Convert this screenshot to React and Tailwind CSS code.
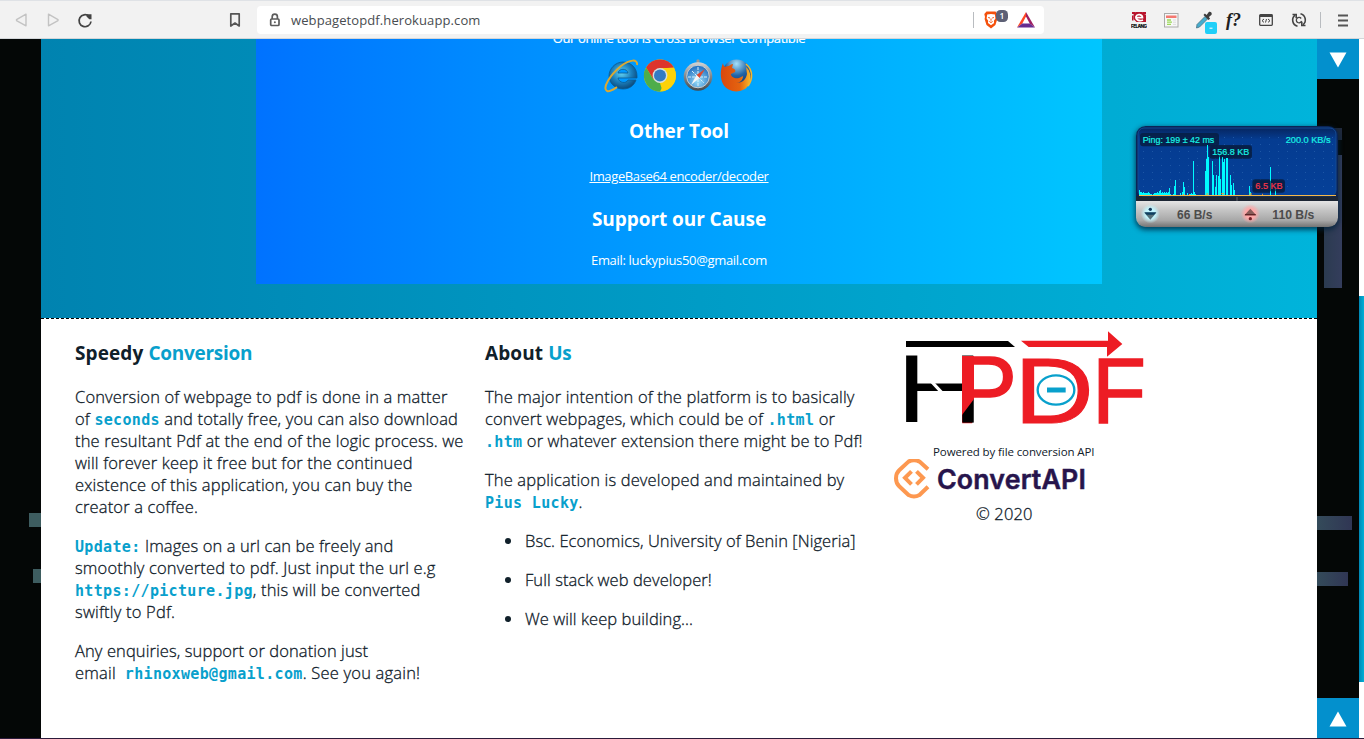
import React from "react";

const sans = "font-['Open_Sans','Noto_Sans',sans-serif]";

function ToolbarDivider({ className = "" }) {
  return <span className={`block h-4 w-px bg-[#b9bcc0] ${className}`} />;
}

function BrowserBar() {
  return (
    <header className="flex h-[39px] w-full items-center border-t border-b border-t-[#dfe2e6] border-b-[#d3d6d9] bg-[#f2f2f2] pt-px pl-[15px]">
      <svg width="80" height="18" viewBox="0 0 80 18" fill="none">
        <path d="M11 3.2v11.6L1.5 9.6V8.6L11 3.2Z" stroke="#c3c3c3" strokeWidth="1.4" strokeLinejoin="round" />
        <path d="M33.500 3.200v11.600L43 9.600V8.600L33.500 3.200Z" stroke="#c3c3c3" strokeWidth="1.400" strokeLinejoin="round" />
        <path d="M74 5.200A6 6 0 1 0 76 10.500" stroke="#434343" strokeWidth="1.700" />
        <path d="M71.500 3.200h5v5h-2.200l-2.800-2.800Z" fill="#434343" />
      </svg>
      <svg className="ml-[134px]" width="12" height="16" viewBox="0 0 12 16" fill="none">
        <path d="M1.800 1.800h8.400v12.200L6 11l-4.200 3Z" stroke="#555" strokeWidth="1.700" strokeLinejoin="round" />
      </svg>
      <div className="ml-4 flex h-7 w-[787px] items-center rounded-[4px] bg-white">
        <svg className="ml-3" width="12" height="14" viewBox="0 0 12 14" fill="none">
          <path d="M3.200 6V3.800a2.600 2.600 0 0 1 5.200 0V6" stroke="#5c5c5c" strokeWidth="1.700" />
          <rect x="1.700" y="6" width="8.300" height="6.500" rx="1" stroke="#5c5c5c" strokeWidth="1.700" />
          <circle cx="5.850" cy="9.200" r="1" fill="#5c5c5c" />
        </svg>
        <span className={`${sans} ml-[10px] text-[13px] leading-none tracking-[0.1px] whitespace-nowrap text-[#484c50]`}>
          webpagetopdf.herokuapp.com
        </span>
        <ToolbarDivider className="mr-[9px] ml-auto" />
        <svg width="26" height="20" viewBox="0 0 26 20">
          <path d="M3.500 1.500h9l2 2.500-.6 3 .4 2-1.900 6L8 18.500 3.500 15 1.600 9 2 7 1.300 4Z" fill="#f4500c" />
          <path d="M4.200 4.500 8 4l3.900.5.500 4-1.500 2.200 .2 2.200L8 15.200l-3-2.300.2-2.200L3.600 8.500Z" fill="#fff" />
          <path d="M5.200 7.500 7 8M10.900 7.500 9.200 8M8 8.500v2.200M6.400 11.500 8 12.500l1.600-1" stroke="#f4500c" strokeWidth="1" fill="none" />
          <rect x="13" y="0" width="12" height="12" rx="4.500" fill="#5d6075" />
          <text x="19" y="9" textAnchor="middle" fontFamily="Open Sans" fontSize="8.500" fontWeight="600" fill="#fff">1</text>
        </svg>
        <svg className="mr-[9px] ml-2" width="18" height="16" viewBox="0 0 18 16">
          <path d="M9 0v4.500L5.300 11.500 0 15.500Z" fill="#ff4724" />
          <path d="M9 0l9 15.500-5.300-4L9 4.500Z" fill="#9e1f63" />
          <path d="M0 15.500h18l-5.300-4H5.300Z" fill="#662d91" />
        </svg>
      </div>
      <div className="ml-auto flex items-center">
        <svg width="16" height="16" viewBox="0 0 16 16">
          <path d="M1 0h3v2H1ZM12 0h3v2h-3ZM1 3.500h1.500v5H1Z" fill="#b8152d" />
          <path d="M4.500 0h7L14 2.500h1V10H5.500L2.500 7V2.500Z" fill="#b8152d" />
          <path d="M5 5.700h6.500C11.500 2 6 1.500 5 4.500 4.300 8 8.500 9.500 12 8" stroke="#fff" strokeWidth="1.700" fill="none" />
          <text x="0" y="15.500" fontFamily="Inter" fontSize="4.600" fontWeight="900" textLength="16" fill="#171717">FELANG</text>
        </svg>
        <svg className="ml-[17px]" width="15" height="15" viewBox="0 0 15 15">
          <rect x=".5" y=".5" width="13.500" height="13.500" fill="#f7f7f7" stroke="#aaa" />
          <rect x="2" y="2.500" width="10.500" height="2.500" fill="#f47870" />
          <path d="M3 7h4M3 9.200h5M3 11.400h4" stroke="#9bda58" strokeWidth="1.300" />
          <path d="M9 7h3M9 9.200h3M9 11.400h3" stroke="#ddd" />
        </svg>
        <svg className="-mb-[5px] ml-[16px]" width="23" height="23" viewBox="0 0 23 23">
          <path d="M2 13.500 10 5.500l2.500 2.500L4.500 16 1.500 17Z" fill="#45adce" stroke="#467083" strokeWidth=".8" />
          <path d="m8.500 4 1.400-1.400L11.600 4l2-2.700c1.500-1.500 4.200.5 2.700 2.700L13.900 6l1.200 1.700-1.600 1.400Z" fill="#3d3d3d" />
          <rect x="10" y="11" width="12" height="12" rx="2" fill="#20cff8" />
          <path d="M14.500 17.200h3" stroke="#fff" strokeWidth="1" />
        </svg>
        <span className="ml-[8px] w-[17px] font-['Liberation_Serif',serif] text-[18px] leading-[18px] font-bold whitespace-nowrap text-[#202020] italic">
          f?
        </span>
        <svg className="ml-[16px]" width="14" height="12" viewBox="0 0 14 12" fill="none">
          <rect x=".7" y=".7" width="12.600" height="10.600" rx=".8" stroke="#444" strokeWidth="1.300" />
          <path d="M1 2h12" stroke="#444" strokeWidth="2" />
          <path d="m5 5-2 1.700 2 1.700M9 5l2 1.700L9 8.400M7.500 5l-1 3.500" stroke="#444" strokeWidth="1" />
        </svg>
        <svg className="ml-[18px]" width="16" height="16" viewBox="0 0 16 16" fill="none" stroke="#454545" strokeWidth="1.600">
          <path d="M6.500 14.200A6.300 6.300 0 0 1 4 3.200M9.500 1.800A6.300 6.300 0 0 1 12 12.800" />
          <path d="M1.500 2.500h3.700v3.700M14.500 13.500h-3.700V9.800" />
          <path d="M10.200 6.500A2.700 2.700 0 1 0 10.600 9" strokeWidth="1.300" />
        </svg>
        <ToolbarDivider className="ml-[13px]" />
        <svg className="mr-4 ml-[17px]" width="10" height="13" viewBox="0 0 10 13">
          <path d="M0 1.500h10M0 6.500h10M0 11.500h10" stroke="#555" strokeWidth="2" />
        </svg>
      </div>
    </header>
  );
}

function BrowserLogos() {
  return (
    <svg width="150" height="36" viewBox="0 0 150 36">
      <defs>
        <radialGradient id="ie" cx=".45" cy=".4" r=".7">
          <stop offset="0" stopColor="#62d4f5" />
          <stop offset=".5" stopColor="#1b7fbd" />
          <stop offset="1" stopColor="#063763" />
        </radialGradient>
        <linearGradient id="steel" x1="0" y1="0" x2="0" y2="1">
          <stop offset="0" stopColor="#d5d5d5" />
          <stop offset=".5" stopColor="#81868b" />
          <stop offset="1" stopColor="#43494e" />
        </linearGradient>
        <radialGradient id="sea" cx=".5" cy=".7" r=".6">
          <stop offset="0" stopColor="#9be0fb" />
          <stop offset="1" stopColor="#2d79c5" />
        </radialGradient>
        <radialGradient id="globe" cx=".5" cy=".15" r=".8">
          <stop offset="0" stopColor="#a5e0fa" />
          <stop offset=".5" stopColor="#2365a7" />
          <stop offset="1" stopColor="#102b67" />
        </radialGradient>
        <linearGradient id="fox" x1="0" y1="0" x2="1" y2="0">
          <stop offset="0" stopColor="#d9480d" />
          <stop offset=".65" stopColor="#e5640f" />
          <stop offset="1" stopColor="#f9b92c" />
        </linearGradient>
      </defs>
      <path fillRule="evenodd" d="M19 4c8 0 14 6 14 14v2H14c1 5 8 6 10 2h8c-2 6-7 9-13 9C11 31 5 25 5 18S11 4 19 4Zm-5 11h10c-1-5-9-5-10 0Z" fill="url(#ie)" stroke="#0a5a94" strokeWidth=".8" />
      <path d="M33 7C34 1 26 1 17 8 6 17-2 30 3 33c3 1 7-2 10-4" fill="none" stroke="#dca932" strokeWidth="2" />
      <circle cx="56" cy="17.500" r="16" fill="#fcd209" />
      <path d="M42.100 9.500A16 16 0 0 1 69.900 9.500L56 10.500 49.500 21.500Z" fill="#dd342c" />
      <path d="M42.100 9.500 49.500 21.500 56 25 58.500 33.300A16 16 0 0 1 42.100 9.500Z" fill="#4ead4a" />
      <path d="M62.500 21 56 33.500A16 16 0 0 0 70 10H57Z" fill="#fcd209" />
      <circle cx="56" cy="17.500" r="7.400" fill="#d5dfe0" />
      <circle cx="56" cy="17.500" r="6" fill="#337bc4" />
      <rect x="92.500" y="1.500" width="3" height="4" rx="1" fill="#999" />
      <circle cx="94" cy="18.500" r="14.300" fill="url(#steel)" />
      <circle cx="94" cy="18.500" r="11.300" fill="url(#sea)" stroke="#c9ced1" />
      <path d="M94 9v20M84 19h20M88 13l12 12" stroke="#d9f0fb" strokeWidth="1" strokeDasharray="3 1" />
      <path d="m101 11-5.500 9-3-3Z" fill="#dd4931" />
      <path d="m87 27 5.500-10 3 3Z" fill="#f3f7f8" />
      <circle cx="132.500" cy="16" r="14.500" fill="url(#globe)" />
      <path d="M119 5c0 2 1 3 2 4 2-1 3-1 4-1 1-1 2-2 4-2l-1 4c3 1 4 2 3 4l-4 2c0 3 4 5 8 4l4-2c0 4-3 7-7 7 7 0 10-4 11-9l-1-7c5 4 6 13 2 19-6 8-20 7-25-2-3-6-3-14 0-21Z" fill="url(#fox)" />
      <path d="M142 6c7 6 7 15 2 22" fill="none" stroke="#f5b32c" strokeWidth="1.600" />
    </svg>
  );
}

function ToolPanel() {
  return (
    <section className={`${sans} flex h-[245px] w-[846px] flex-col items-center overflow-hidden bg-linear-to-r from-[#0072ff] to-[#00c6ff] whitespace-nowrap text-white`}>
      <p className="-mt-[11px] h-5 text-[13px] leading-5 tracking-[-0.36px] [-webkit-text-stroke:0.2px]">Our online tool is Cross Browser Compatible</p>
      <div className="mt-[10px] h-9">
        <BrowserLogos />
      </div>
      <h2 className="mt-6 text-[19px] leading-[26px] font-bold tracking-[-0.1px]">Other Tool</h2>
      <a className="mt-[22px] text-[13px] leading-5 tracking-[-0.37px] underline">ImageBase64 encoder/decoder</a>
      <h2 className="mt-5 text-[19px] leading-[26px] font-bold tracking-[-0.06px]">Support our Cause</h2>
      <p className="mt-[18px] text-[13px] leading-5 tracking-[-0.32px]">Email: luckypius50@gmail.com</p>
    </section>
  );
}

function Line({ className = "", children }) {
  return <span className={`block h-[22px] whitespace-pre ${className}`}>{children}</span>;
}

function Mono({ children }) {
  return (
    <b className="font-['DejaVu_Sans_Mono','Liberation_Mono',monospace] text-[15px] leading-none font-bold tracking-[0.33px] text-[#08a0cc] [-webkit-text-stroke:0]">
      {children}
    </b>
  );
}

function Heading({ first, second }) {
  return (
    <h3 className="mb-[22px] h-[22px] text-[19px] leading-[22px] font-bold tracking-[0.1px] text-[#10202a] [-webkit-text-stroke:0]">
      {first} <span className="tracking-[-0.27px] text-[#08a0cc]">{second}</span>
    </h3>
  );
}

function SpeedyColumn() {
  return (
    <div className="w-[410px]">
      <Heading first="Speedy" second="Conversion" />
      <p className="mb-[17px]">
        <Line>Conversion of webpage to pdf is done in a matter</Line>
        <Line>of <Mono>seconds</Mono> and totally free, you can also download</Line>
        <Line>the resultant Pdf at the end of the logic process. we</Line>
        <Line>will forever keep it free but for the continued</Line>
        <Line>existence of this application, you can buy the</Line>
        <Line>creator a coffee.</Line>
      </p>
      <p className="mb-[17px]">
        <Line className="tracking-[0.1px]"><Mono>Update:</Mono> Images on a url can be freely and</Line>
        <Line className="tracking-[0.17px]">smoothly converted to pdf. Just input the url e.g</Line>
        <Line><Mono>https://picture.jpg</Mono>, this will be converted</Line>
        <Line className="tracking-[0.2px]">swiftly to Pdf.</Line>
      </p>
      <p>
        <Line className="tracking-[0.1px]">Any enquiries, support or donation just</Line>
        <Line className="tracking-[0.2px]">email  <Mono>rhinoxweb@gmail.com</Mono>. See you again!</Line>
      </p>
    </div>
  );
}

function AboutColumn() {
  return (
    <div className="w-[409px]">
      <Heading first="About" second="Us" />
      <p className="mb-[17px]">
        <Line>The major intention of the platform is to basically</Line>
        <Line>convert webpages, which could be of <Mono>.html</Mono> or</Line>
        <Line className="tracking-[0.11px]"><Mono>.htm</Mono> or whatever extension there might be to Pdf!</Line>
      </p>
      <p className="mb-[17px]">
        <Line>The application is developed and maintained by</Line>
        <Line><Mono>Pius Lucky</Mono>.</Line>
      </p>
      <ul className="flex flex-col gap-[17px] tracking-[0.07px]">
        {["Bsc. Economics, University of Benin [Nigeria]", "Full stack web developer!", "We will keep building..."].map((item) => (
          <li key={item} className="flex items-center pl-5">
            <span className="mr-[14px] size-[6px] rounded-full bg-[#10202a]" />
            <Line>{item}</Line>
          </li>
        ))}
      </ul>
    </div>
  );
}

function HpdfLogo() {
  return (
    <svg className="ml-[11px] overflow-visible" width="240" height="97" viewBox="75 15 720 291" fontFamily="Liberation Sans">
      <path d="M78 48H384L405 66H78Z" fill="#000" />
      <path d="M423 47H684V19L727 57 681 95V66H446Z" fill="#ed1c24" />
      <text transform="translate(48.500 291) scale(1.240 1)" fontSize="291" fill="#000">H</text>
      <path d="M150 172h13l28 30h-13Z" fill="#fff" />
      <text transform="translate(225.500 290) scale(.98 1)" fontSize="284" fill="#ed1c24" stroke="#ed1c24" strokeWidth="4">P</text>
      <path d="M247 222H281V293H247Z" fill="#000" />
      <path d="M246 93H282V222L246 270Z" fill="#ed1c24" />
      <text transform="translate(403 294) scale(1.180 1)" fontSize="280" fill="#ed1c24" stroke="#ed1c24" strokeWidth="3">D</text>
      <text transform="translate(636 294) scale(.95 1)" fontSize="280" fill="#ed1c24" stroke="#ed1c24" strokeWidth="4">F</text>
      <ellipse cx="528" cy="195" rx="55" ry="44" fill="#fff" stroke="#08a0cc" strokeWidth="7" />
      <path d="M501 195h56" stroke="#08a0cc" strokeWidth="15" />
    </svg>
  );
}

function ConvertApiLogo() {
  return (
    <svg width="196" height="40" viewBox="0 0 196 40">
      <g fill="none" stroke="#fd9850" strokeWidth="4" strokeLinejoin="round" transform="translate(0 -.7)">
        <path d="M34 11 25.500 3.300Q20 .500 14.500 3.300L5.200 12Q2 15 2 20T5.200 28L14.500 36.700Q20 39.500 25.500 36.700L34 28.500" />
        <path d="M17.500 13 11 19.500 17.500 26M22.500 13 29 19.500 22.500 26" strokeLinejoin="miter" />
      </g>
      <text x="43" y="29.500" fontFamily="Inter" fontSize="26.500" fontWeight="600" textLength="149" lengthAdjust="spacingAndGlyphs" fill="#27144c" stroke="#27144c" strokeWidth=".5">ConvertAPI</text>
    </svg>
  );
}

function CreditsColumn() {
  return (
    <div className="-mt-3 flex w-[250px] flex-col">
      <HpdfLogo />
      <p className="mt-[17px] ml-[39px] text-[11.5px] leading-4 font-normal tracking-[-0.1px] whitespace-nowrap [-webkit-text-stroke:0]">Powered by file conversion API</p>
      <div className="-mt-[1px] h-10 [-webkit-text-stroke:0]">
        <ConvertApiLogo />
      </div>
      <p className="mt-1 ml-[82px]">© 2020</p>
    </div>
  );
}

function Footer() {
  return (
    <footer className={`${sans} flex h-[420px] border-t border-dashed border-black bg-white pt-[23px] pl-[34px] text-[16.5px] leading-[22px] font-light tracking-[0.15px] text-[#10202a] [-webkit-text-stroke:0.3px]`}>
      <SpeedyColumn />
      <AboutColumn />
      <CreditsColumn />
    </footer>
  );
}

const traffic = [
  [57, 225], [60, 230], [63, 232], [66, 234], [69, 232], [72, 234], [75, 235], [78, 233], [81, 234], [84, 231], [87, 233],
  [90, 236], [93, 238], [96, 239], [99, 238], [102, 235], [105, 233], [108, 235], [111, 232], [114, 234], [117, 228], [120, 226],
  [123, 233], [126, 232], [129, 234], [132, 232], [135, 233], [138, 231], [141, 234], [144, 232], [147, 219], [150, 236],
  [159, 236], [162, 212], [165, 195], [180, 234], [186, 232], [189, 201], [192, 216], [201, 235], [210, 238], [213, 233],
  [216, 236], [219, 138], [222, 230], [225, 236], [255, 168], [258, 132], [261, 90], [264, 125], [276, 138], [279, 180],
  [285, 216], [288, 180], [294, 183], [297, 118], [300, 192], [306, 125], [309, 142], [312, 132], [318, 130], [321, 129],
  [330, 180], [333, 210], [339, 204], [342, 226], [387, 213], [390, 230], [450, 156], [465, 222],
];

function TrafficMeter() {
  return (
    <div className="absolute top-[126px] left-[1136px] h-[101px] w-[202px] rounded-[10px] shadow-[0_2px_5px_1px_rgba(0,35,60,0.75)]">
      <svg width="202" height="101" viewBox="48 33 606 303" fontFamily="Liberation Sans">
        <defs>
          <linearGradient id="metal" x1="0" y1="0" x2="0" y2="1">
            <stop offset="0" stopColor="#e5e5e5" />
            <stop offset=".35" stopColor="#c5c5c5" />
            <stop offset=".75" stopColor="#a7a7a7" />
            <stop offset="1" stopColor="#747474" />
          </linearGradient>
          <linearGradient id="screen" x1="0" y1="0" x2="0" y2="1">
            <stop offset="0" stopColor="#062660" />
            <stop offset=".17" stopColor="#053c91" />
            <stop offset="1" stopColor="#054098" />
          </linearGradient>
          <pattern id="dots" x="69" y="66" width="27" height="21" patternUnits="userSpaceOnUse">
            <rect width="3" height="3" fill="#1d57a6" />
          </pattern>
          <radialGradient id="blueGlow"><stop offset=".5" stopColor="#c2f6ff" /><stop offset="1" stopColor="#c2f6ff" stopOpacity="0" /></radialGradient>
          <radialGradient id="redGlow"><stop offset=".5" stopColor="#ffa8a8" /><stop offset="1" stopColor="#ffa8a8" stopOpacity="0" /></radialGradient>
          <clipPath id="shell"><rect x="48" y="33" width="606" height="303" rx="29" /></clipPath>
        </defs>
        <g clipPath="url(#shell)">
          <rect x="48" y="33" width="606" height="225" fill="#0a2457" />
          <rect x="54" y="39" width="594" height="205" rx="18" fill="url(#screen)" stroke="#154b93" strokeWidth="3" />
          <rect x="60" y="55" width="580" height="175" fill="url(#dots)" />
          <rect x="48" y="244" width="606" height="14" fill="#1c2533" />
          <rect x="48" y="258" width="606" height="78" fill="url(#metal)" />
          <path d="M351 246v12" stroke="#5b6069" strokeWidth="3" />
        </g>
        <g fill="#071f45" fillOpacity=".88">
          <rect x="60" y="54" width="237" height="40" rx="9" />
          <rect x="268" y="90" width="128" height="41" rx="9" />
          <rect x="397" y="193" width="98" height="40" rx="9" />
        </g>
        <g fill="#00fbff" shapeRendering="crispEdges">
          {traffic.map(([x, y]) => (
            <rect key={x} x={x} y={y} width="3" height={241 - y} />
          ))}
        </g>
        <rect x="57" y="240" width="591" height="3" fill="#f5b84a" />
        <path d="M189 238.500h3M207 238.500h3M259 237h6M304 236h8M388 237h8M426 238h3" stroke="#ff9c28" strokeWidth="3" />
        <g fill="#071f45" fillOpacity=".65">
          <rect x="272" y="94" width="120" height="33" rx="6" />
          <rect x="401" y="197" width="90" height="32" rx="6" />
        </g>
        <g fontSize="29" fill="#18f3e6" stroke="#18f3e6" strokeWidth=".6">
          <text x="68" y="84" textLength="215" lengthAdjust="spacingAndGlyphs">Ping: 199 ± 42 ms</text>
          <text x="497" y="84" textLength="135" lengthAdjust="spacingAndGlyphs">200.0 KB/s</text>
          <text x="277" y="120" textLength="111" lengthAdjust="spacingAndGlyphs">156.8 KB</text>
          <text x="406" y="222" textLength="82" lengthAdjust="spacingAndGlyphs" fill="#fc3548" stroke="#fc3548">6.5 KB</text>
        </g>
        <circle cx="91" cy="296" r="29" fill="url(#blueGlow)" />
        <circle cx="91" cy="283" r="5" fill="#14395b" />
        <path d="M73 293h36l-18 21Z" fill="#557078" />
        <path d="M73 292h36l-7 7H80Z" fill="#0c3f60" />
        <circle cx="391" cy="296" r="29" fill="url(#redGlow)" />
        <circle cx="391" cy="311" r="5" fill="#762329" />
        <path d="M373 301h36l-18-20Z" fill="#875c59" />
        <path d="M375 299h32" stroke="#602627" strokeWidth="4" />
        <g fontSize="36" fontWeight="700" fill="#4c4c4c">
          <text x="171" y="312" textLength="106" lengthAdjust="spacingAndGlyphs">66 B/s</text>
          <text x="457" y="312" textLength="126" lengthAdjust="spacingAndGlyphs">110 B/s</text>
        </g>
      </svg>
    </div>
  );
}

function ScrollButton({ up = false }) {
  return (
    <button className="flex h-10 w-[42px] items-center justify-center bg-[#0390cd]" aria-label={up ? "Scroll up" : "Scroll down"}>
      <svg className="mt-0.5" width="18" height="16" viewBox="0 0 18 16">
        <path d={up ? "M9 .5 17.500 15.500H.5Z" : "M.5 .5H17.500L9 15.500Z"} fill="#fff" />
      </svg>
    </button>
  );
}

export default function App() {
  return (
    <div className="relative flex h-[739px] w-[1364px] flex-col overflow-hidden bg-white">
      <BrowserBar />
      <div className="flex h-[699px]">
        <div className="flex w-[41px] flex-col items-end bg-[#040706] pt-[474px]">
          <div className="h-[14px] w-3 bg-[#3e5d60]" />
          <div className="mt-[42px] h-[14px] w-2 bg-[#3e5d60]" />
        </div>
        <main className="w-[1276px]">
          <div className="h-[279px] bg-linear-to-r from-[#0083b0] to-[#00b4db] pl-[215px]">
            <ToolPanel />
          </div>
          <Footer />
        </main>
        <aside className="flex w-[42px] flex-col bg-[#040706]">
          <ScrollButton />
          <div className="mt-[49px] ml-[8px] h-[12px] w-[17px] bg-[#20293c]" />
          <div className="mt-[15px] ml-[7px] h-[133px] w-[18px] bg-linear-to-r from-[#2b3b50] to-[#343d5c]" />
          <div className="mt-[228px] h-[14px] w-[35px] bg-linear-to-r from-[#344b5a] to-[#303654]" />
          <div className="mt-[42px] h-[14px] w-[31px] bg-linear-to-r from-[#344b5a] to-[#303654]" />
          <div className="mt-auto">
            <ScrollButton up />
          </div>
        </aside>
        <div className="w-[5px] bg-white pt-[257px]">
          <div className="h-[386px] bg-linear-to-r from-[#0087b4] to-[#00b0d7]" />
        </div>
      </div>
      <div className="h-px w-full bg-[#2c1b3b]" />
      <TrafficMeter />
    </div>
  );
}
